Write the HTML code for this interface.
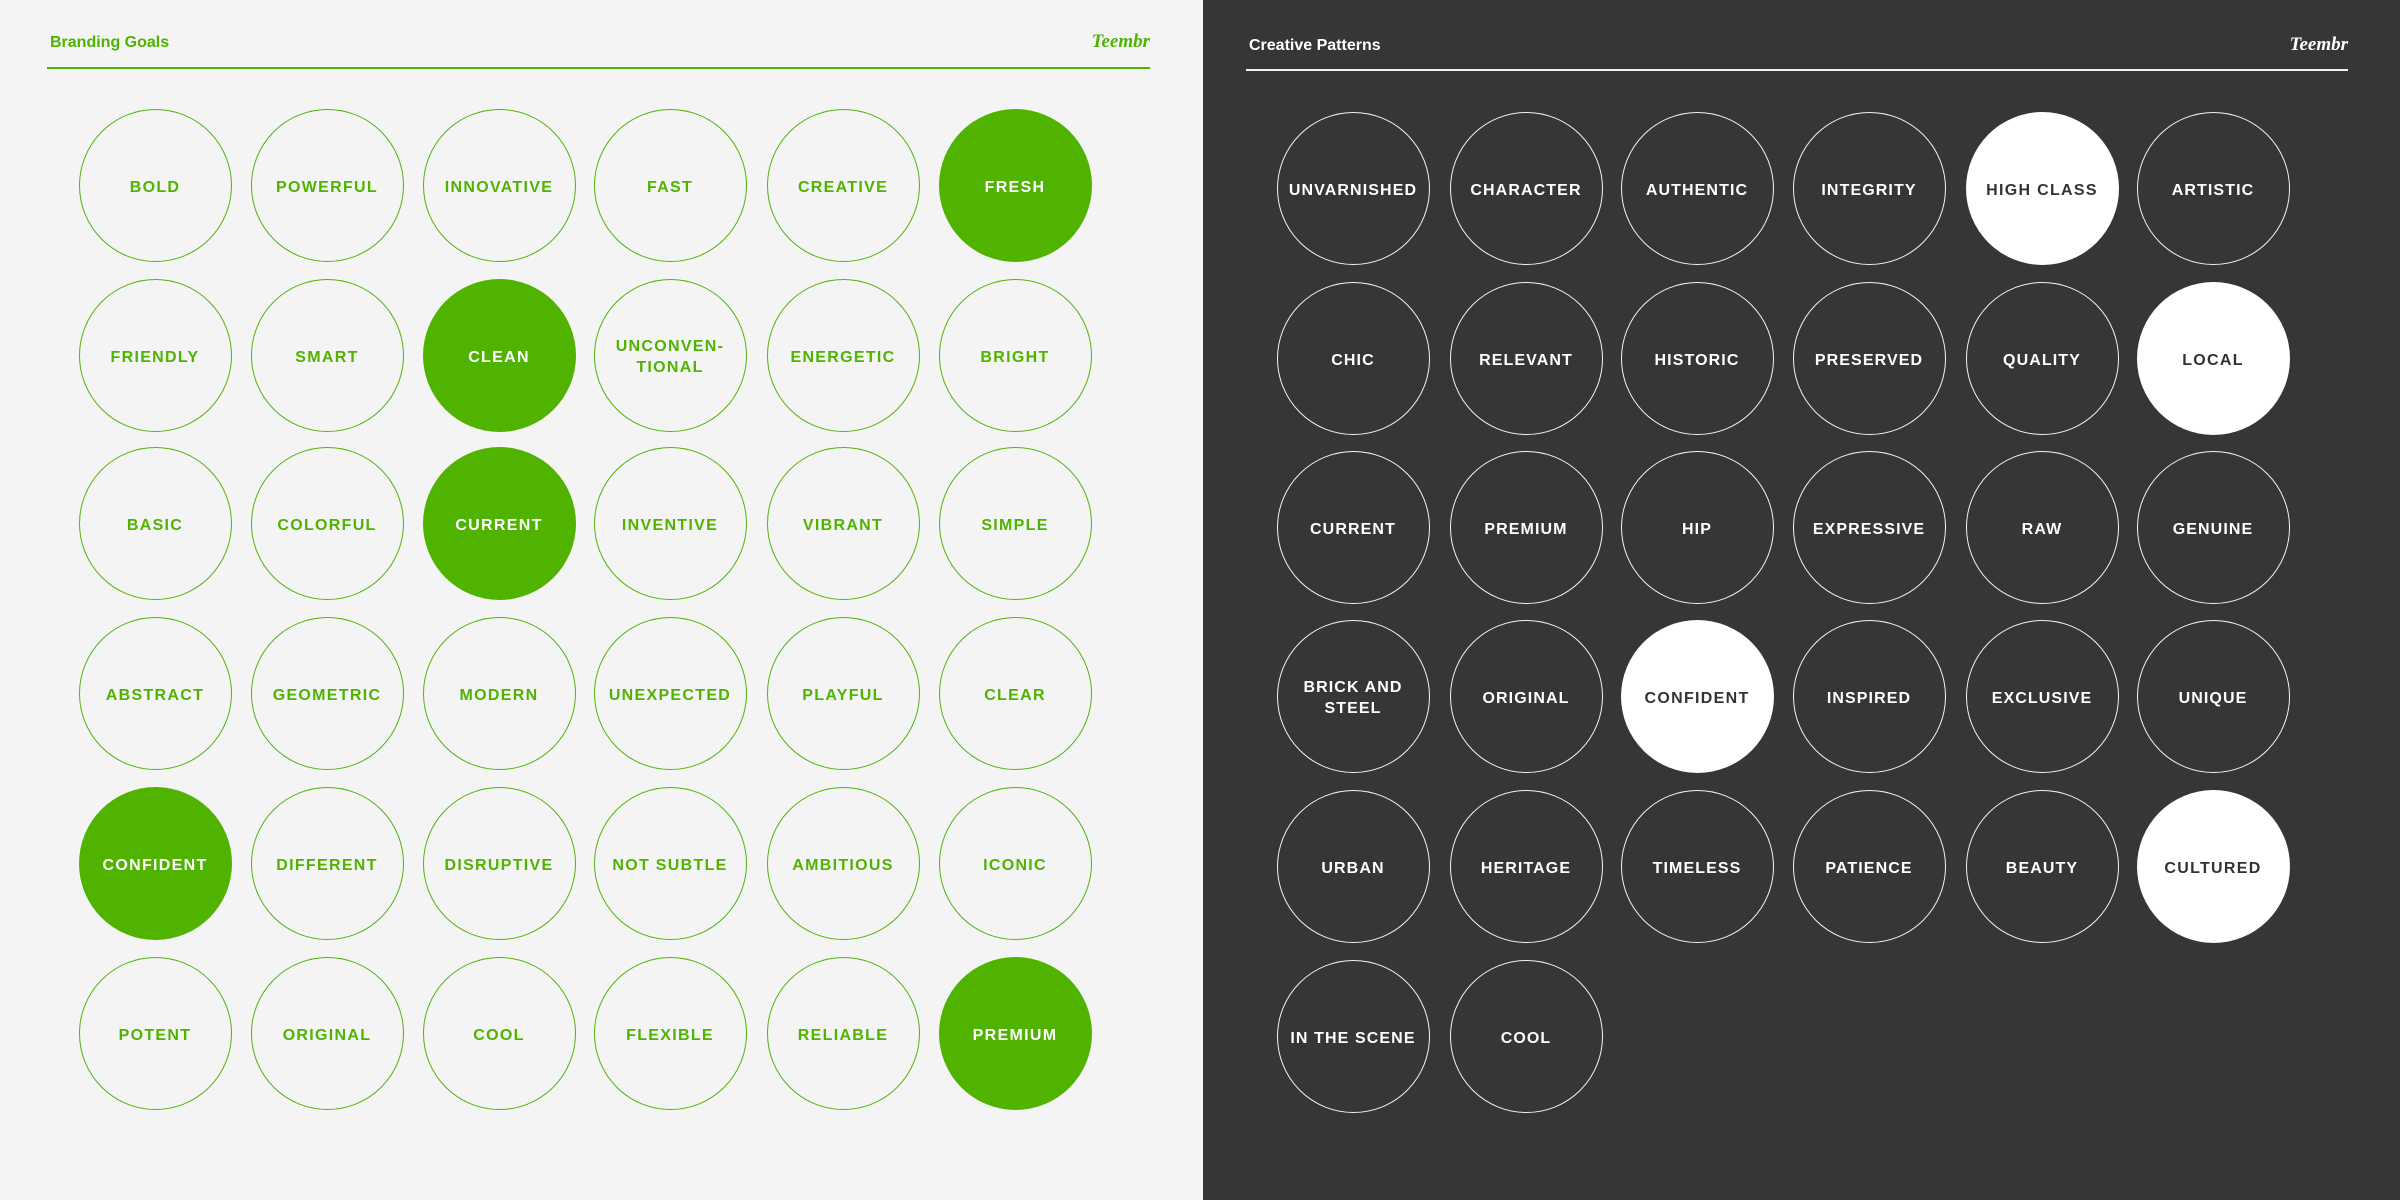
<!DOCTYPE html>
<html><head><meta charset="utf-8">
<style>
*{margin:0;padding:0;box-sizing:border-box}
body{width:2400px;height:1200px;position:relative;overflow:hidden;font-family:"Liberation Sans",sans-serif}
.l{position:absolute;left:0;top:0;width:1203px;height:1200px;background:#f4f4f4}
.r{position:absolute;left:1203px;top:0;width:1197px;height:1200px;background:#363636}
.c{position:absolute;width:153px;height:153px;border-radius:50%;display:flex;align-items:center;justify-content:center;text-align:center;font-weight:bold;font-size:16px;letter-spacing:1.3px;line-height:21px;padding-top:4px}
.g{border:1.5px solid #52b50a;color:#4fb300}
.gf{background:#4fb300;color:#fff;border:none}
.w{border:1.5px solid #f2f2f2;color:#fff;letter-spacing:1.1px}
.wf{background:#fff;color:#333;border:none}
.t{position:absolute;font-weight:bold;font-size:16px}
.logo{position:absolute;font-family:"Liberation Serif",serif;font-style:italic;font-weight:bold;font-size:19px;text-align:right;width:100px}
</style></head><body>
<div class="l"></div><div class="r"></div>
<div class="t" style="left:50px;top:34px;color:#4fb300">Branding Goals</div>
<div class="logo" style="left:1050px;top:31px;color:#4fb300">Teembr</div>
<div style="position:absolute;left:47px;top:67px;width:1103px;height:2px;background:#4fb300"></div>
<div class="t" style="left:1249px;top:37px;color:#fff">Creative Patterns</div>
<div class="logo" style="left:2248px;top:34px;color:#fff">Teembr</div>
<div style="position:absolute;left:1246px;top:69px;width:1102px;height:2px;background:#f2f2f2"></div>
<div id="g"></div>
<script>
const L=[["BOLD","POWERFUL","INNOVATIVE","FAST","CREATIVE","FRESH*"],
["FRIENDLY","SMART","CLEAN*","UNCONVEN-<br>TIONAL","ENERGETIC","BRIGHT"],
["BASIC","COLORFUL","CURRENT*","INVENTIVE","VIBRANT","SIMPLE"],
["ABSTRACT","GEOMETRIC","MODERN","UNEXPECTED","PLAYFUL","CLEAR"],
["CONFIDENT*","DIFFERENT","DISRUPTIVE","NOT SUBTLE","AMBITIOUS","ICONIC"],
["POTENT","ORIGINAL","COOL","FLEXIBLE","RELIABLE","PREMIUM*"]];
const R=[["UNVARNISHED","CHARACTER","AUTHENTIC","INTEGRITY","HIGH CLASS*","ARTISTIC"],
["CHIC","RELEVANT","HISTORIC","PRESERVED","QUALITY","LOCAL*"],
["CURRENT","PREMIUM","HIP","EXPRESSIVE","RAW","GENUINE"],
["BRICK AND<br>STEEL","ORIGINAL","CONFIDENT*","INSPIRED","EXCLUSIVE","UNIQUE"],
["URBAN","HERITAGE","TIMELESS","PATIENCE","BEAUTY","CULTURED*"],
["IN THE SCENE","COOL"]];
const lx=[155,327,499,670,843,1015],ly=[185,355,523,693,863,1033];
const rx=[1353,1526,1697,1869,2042,2213],ry=[188,358,527,696,866,1036];
let h="";
function put(D,xs,ys,o,f){D.forEach((row,i)=>row.forEach((s,j)=>{let fill=s.endsWith("*");s=s.replace("*","");
h+=`<div class="c ${fill?f:o}" style="left:${xs[j]-76.5}px;top:${ys[i]-76.5}px">${s}</div>`;}));}
put(L,lx,ly,"g","gf");put(R,rx,ry,"w","wf");
document.getElementById("g").innerHTML=h;
</script>
</body></html>
